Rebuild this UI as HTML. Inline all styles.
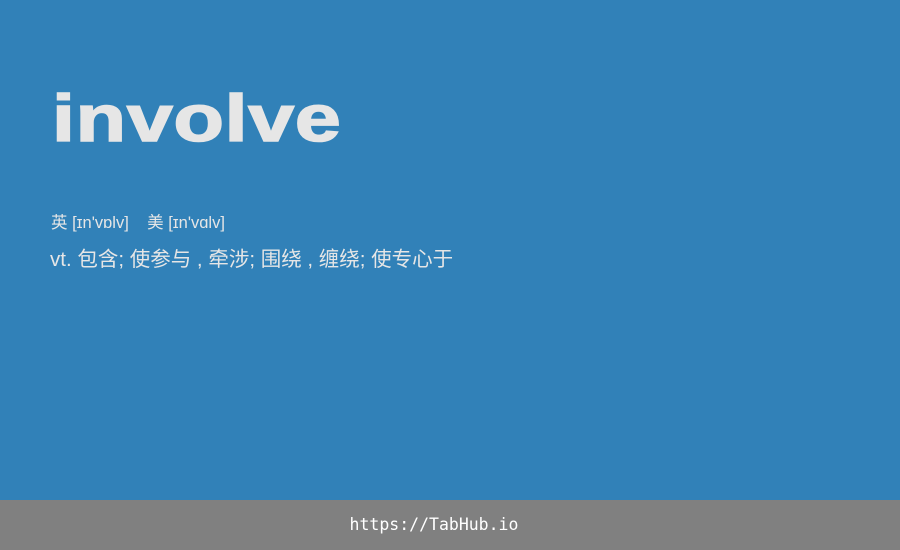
<!DOCTYPE html>
<html><head><meta charset="utf-8"><style>
html,body{margin:0;padding:0;}
body{width:900px;height:550px;background:#3181b8;position:relative;overflow:hidden;font-family:"Liberation Sans","Noto Sans CJK SC",sans-serif;color:#e6e6e6;}
.w{position:absolute;left:52px;top:78px;font-size:66px;font-weight:bold;line-height:80px;letter-spacing:0.6px;transform:scaleX(1.25);transform-origin:0 0;white-space:nowrap;-webkit-text-stroke:1.6px #e6e6e6;}
.p{position:absolute;left:51px;top:212px;font-size:16.5px;line-height:22px;white-space:nowrap;}
.d{position:absolute;left:50px;top:247px;font-size:20.5px;line-height:26px;white-space:nowrap;}
.f{position:absolute;left:0;top:500px;width:868px;padding-right:32px;height:50px;background:#808080;color:#fff;font-family:"DejaVu Sans Mono","Liberation Mono",monospace;font-size:16.5px;line-height:50px;text-align:center;}
</style></head><body>
<div class="w">involve</div>
<div class="p">英 [ɪn'vɒlv]&nbsp;&nbsp;&nbsp;&nbsp;美 [ɪn'vɑlv]</div>
<div class="d">vt. 包含; 使参与 , 牵涉; 围绕 , 缠绕; 使专心于</div>
<div class="f">https://TabHub.io</div>
</body></html>
